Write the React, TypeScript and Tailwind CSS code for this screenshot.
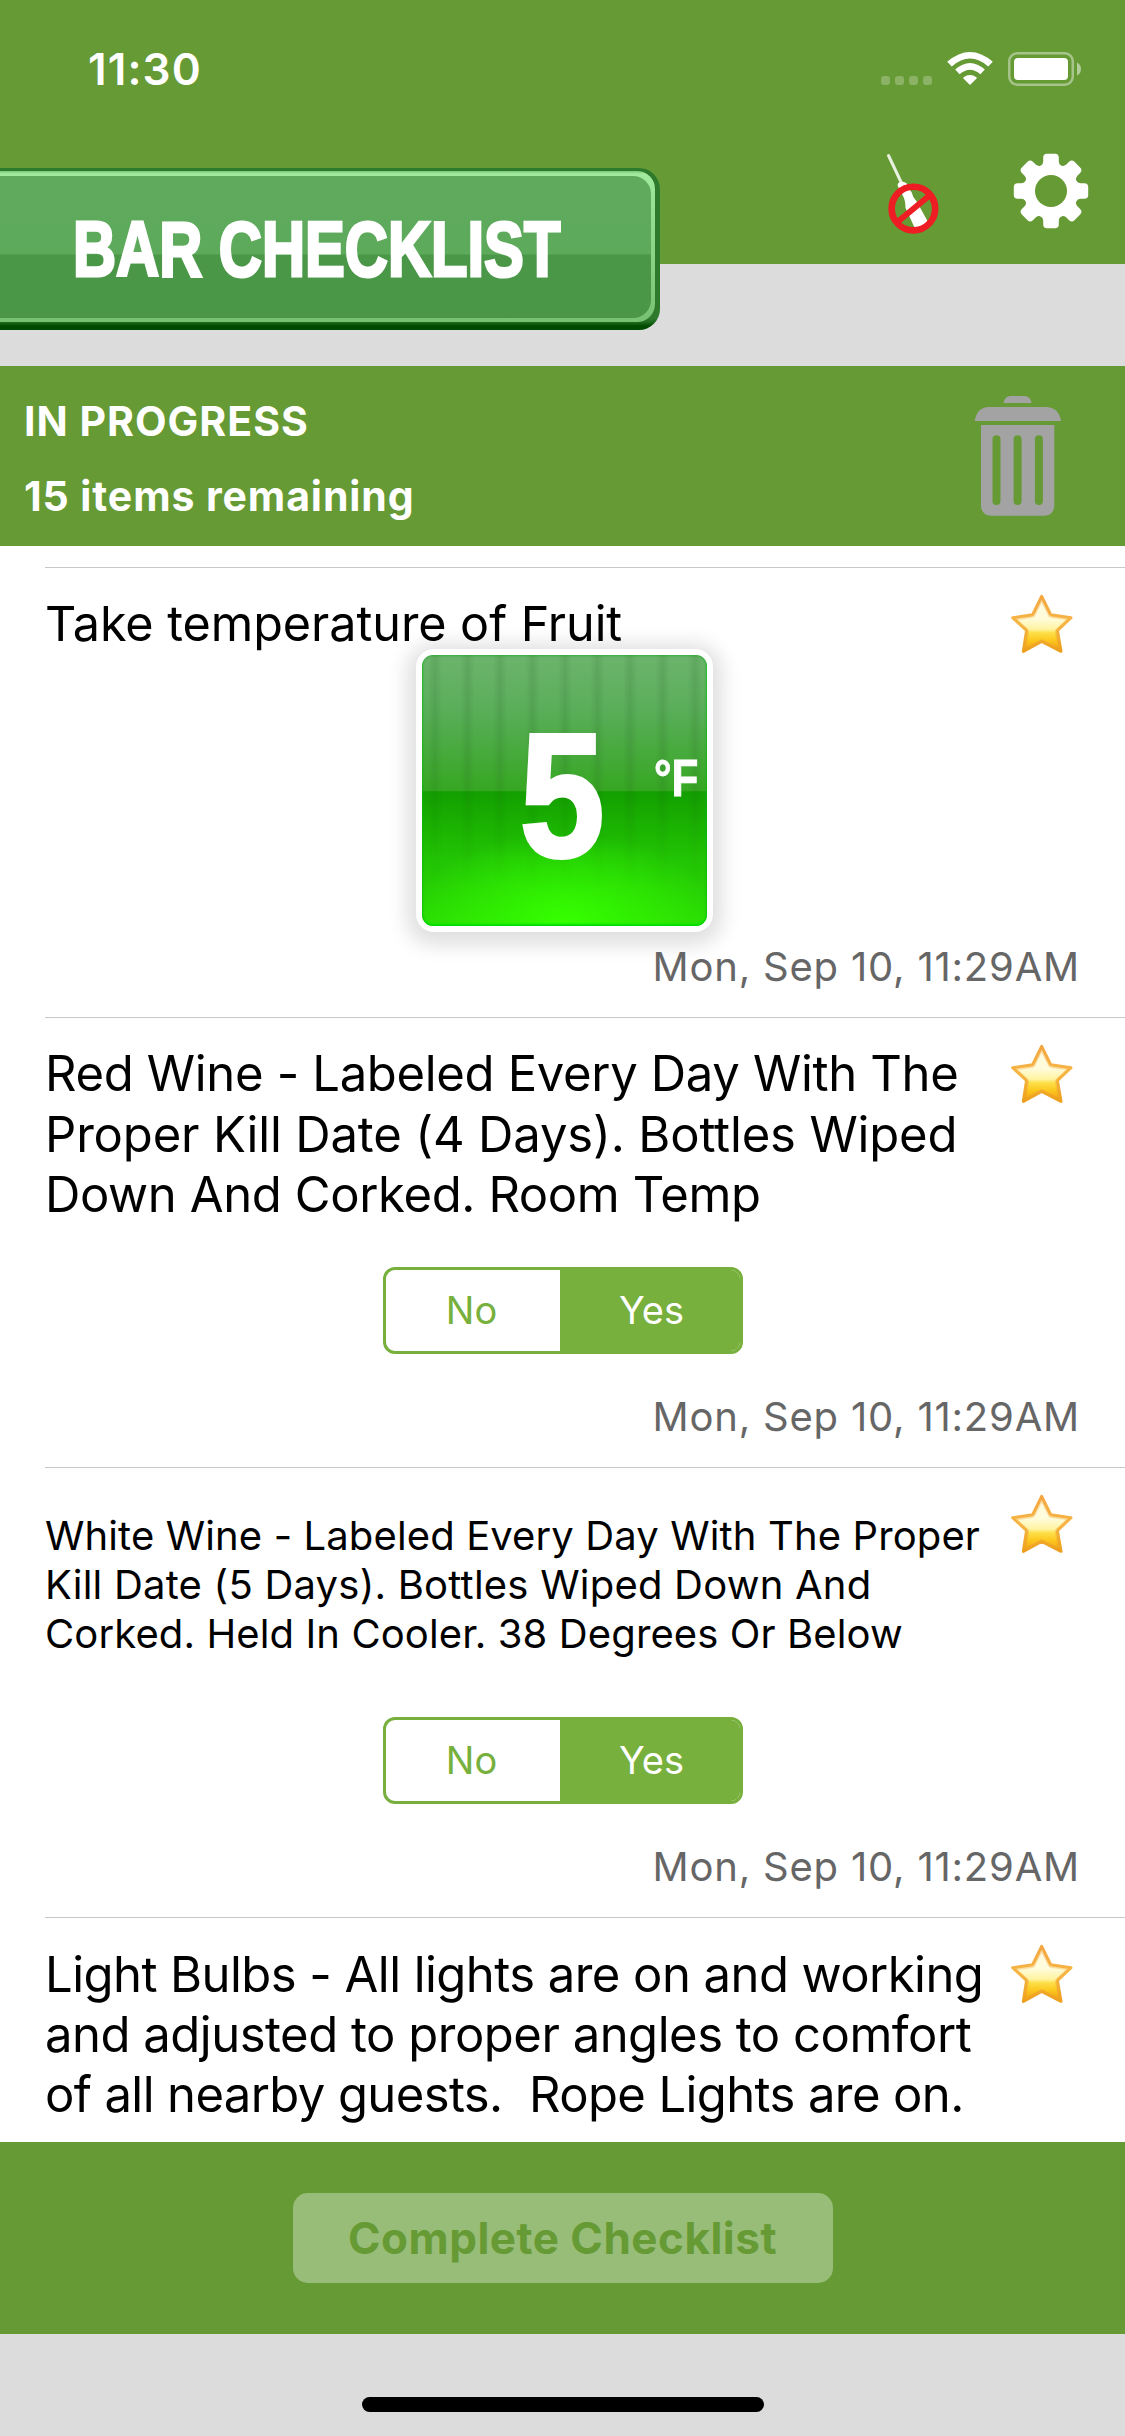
interface Line {
  text: string;
  tracking: string;
}

interface ChecklistItem {
  id: number;
  lines: Line[];
  textClass: string;
  type?: 'temperature' | 'yesno';
  value?: string;
  date?: string;
}

const items: ChecklistItem[] = [
  {
    id: 1,
    textClass: 'pt-[26px] text-[48.5px] leading-[60px]',
    lines: [{ text: 'Take temperature of Fruit', tracking: 'tracking-[-0.05px]' }],
    type: 'temperature',
    value: '5',
    date: 'Mon, Sep 10, 11:29AM',
  },
  {
    id: 2,
    textClass: 'pt-[26px] text-[49px] leading-[60.5px]',
    lines: [
      { text: 'Red Wine - Labeled Every Day With The', tracking: 'tracking-[-0.33px]' },
      { text: 'Proper Kill Date (4 Days). Bottles Wiped', tracking: 'tracking-[-0.16px]' },
      { text: 'Down And Corked. Room Temp', tracking: 'tracking-[-0.38px]' },
    ],
    type: 'yesno',
    value: 'Yes',
    date: 'Mon, Sep 10, 11:29AM',
  },
  {
    id: 3,
    textClass: 'pt-[43px] text-[40px] leading-[49px]',
    lines: [
      { text: 'White Wine - Labeled Every Day With The Proper', tracking: 'tracking-[0.12px]' },
      { text: 'Kill Date (5 Days). Bottles Wiped Down And', tracking: 'tracking-[0.22px]' },
      { text: 'Corked. Held In Cooler. 38 Degrees Or Below', tracking: 'tracking-[0.11px]' },
    ],
    type: 'yesno',
    value: 'Yes',
    date: 'Mon, Sep 10, 11:29AM',
  },
  {
    id: 4,
    textClass: 'pt-[27px] text-[49px] leading-[60px]',
    lines: [
      { text: 'Light Bulbs - All lights are on and working', tracking: 'tracking-[-0.55px]' },
      { text: 'and adjusted to proper angles to comfort', tracking: 'tracking-[-0.49px]' },
      { text: 'of all nearby guests.  Rope Lights are on.', tracking: 'tracking-[-0.61px]' },
    ],
  },
];

function StatusIcons() {
  return (
    <svg className="mt-[50px] h-[38px] w-[204px]" viewBox="880 50 204 38" fill="#fff">
      <g opacity="0.24">
        <rect x="881" y="76" width="9" height="9" rx="3" />
        <rect x="895" y="76" width="9" height="9" rx="3" />
        <rect x="909" y="76" width="9" height="9" rx="3" />
        <rect x="923" y="76" width="9" height="9" rx="3" />
      </g>
      <path d="M970 85 L963.2 78.2 Q963 77.6 963.6 77.2 Q970 72.6 976.4 77.2 Q977 77.6 976.8 78.2 Z" />
      <path d="M955.2 69.6 Q970 56.4 984.8 69.6 L980.4 74.2 Q970 65.2 959.6 74.2 Z" />
      <path d="M947.2 61.8 Q970 42.2 992.8 61.8 L988.2 66.4 Q970 50.6 951.8 66.4 Z" />
      <rect x="1009.25" y="53.25" width="63.5" height="31.5" rx="8" fill="none" stroke="#fff" strokeWidth="2.5" opacity="0.42" />
      <rect x="1014" y="58" width="54" height="22" rx="4" />
      <path d="M1077 62.5 Q1081 64.5 1081 69 Q1081 73.5 1077 75.5 Z" opacity="0.5" />
    </svg>
  );
}

function NoBottleIcon() {
  return (
    <svg className="h-[86px] w-[56px]" viewBox="885 150 56 86">
      <path d="M888.5 155.5 L901.5 183" stroke="#fff" strokeOpacity="0.85" strokeWidth="3" strokeLinecap="round" />
      <path d="M897.5 185.5 Q898 181 904 182 Q908 183 907.5 187 L911.5 192 Q912.5 197 917 202 L927.5 221 Q922 229 914.5 227.5 L905.5 208 Q905.5 200 902.5 195 Z" fill="#fff" />
      <circle cx="913.4" cy="208.6" r="21.8" fill="none" stroke="#ee1c23" strokeWidth="6.6" />
      <path d="M898 221.5 L929.5 195.5" stroke="#ee1c23" strokeWidth="6" />
    </svg>
  );
}

function GearIcon() {
  return (
    <svg className="h-[78px] w-[78px]" viewBox="-39 -39 78 78">
      <g fill="#fff">
        {[0, 45, 90, 135].map((angle) => (
          <path
            key={angle}
            transform={`rotate(${angle})`}
            d="M-4 -37.2 H4 Q7.8 -37.2 7.8 -33.4 V-29.5 Q8.2 -24.8 13.5 -24.4 L13.5 24.4 Q8.2 24.8 7.8 29.5 V33.4 Q7.8 37.2 4 37.2 H-4 Q-7.8 37.2 -7.8 33.4 V29.5 Q-8.2 24.8 -13.5 24.4 L-13.5 -24.4 Q-8.2 -24.8 -7.8 -29.5 V-33.4 Q-7.8 -37.2 -4 -37.2 Z"
          />
        ))}
      </g>
      <circle r="16" fill="#669a34" />
    </svg>
  );
}

function TrashIcon() {
  return (
    <svg className="h-[122px] w-[88px]" viewBox="974 395 88 122" fill="#a3a3a3">
      <path d="M1003.5 403 Q1005 396 1010.5 396 H1024.5 Q1030 396 1031.7 403 Z" />
      <path d="M974.7 421 Q977 407 989 407 H1047 Q1059 408 1061 421 Z" />
      <path
        fillRule="evenodd"
        d="M981 425 H1054.3 V505 Q1054.3 515.8 1043.5 515.8 H992 Q981 515.8 981 505 Z
           M992.5 439.3 V501 A4 4 0 0 0 1000.5 501 V439.3 A4 4 0 0 0 992.5 439.3 Z
           M1013.6 439.3 V501 A4 4 0 0 0 1021.6 501 V439.3 A4 4 0 0 0 1013.6 439.3 Z
           M1034.9 439.3 V501 A4 4 0 0 0 1042.9 501 V439.3 A4 4 0 0 0 1034.9 439.3 Z"
      />
    </svg>
  );
}

const STAR =
  'M125 33 L151 86 Q153 89 157 89 L213 97 L175 133 Q172 136 173 140 L183 198 L125 168 L70 198 L79 140 Q80 136 77 133 L38 97 L93 89 Q97 89 99 86 Z';

function StarIcon() {
  return (
    <svg className="h-[60px] w-[64px]" viewBox="30 26 192 180">
      <defs>
        <linearGradient id="starFill" x1="0" y1="0" x2="0" y2="1">
          <stop offset="0" stopColor="#fffbe0" />
          <stop offset="0.4" stopColor="#fffcdc" />
          <stop offset="0.6" stopColor="#fff3a0" />
          <stop offset="0.66" stopColor="#fde04a" />
          <stop offset="0.8" stopColor="#fcc81e" />
          <stop offset="1" stopColor="#f09a14" />
        </linearGradient>
        <linearGradient id="starEdge" x1="0" y1="0" x2="0" y2="1">
          <stop offset="0" stopColor="#f4a640" />
          <stop offset="0.5" stopColor="#f6b544" />
          <stop offset="1" stopColor="#eda01e" />
        </linearGradient>
      </defs>
      <path d={STAR} fill="url(#starFill)" stroke="url(#starEdge)" strokeWidth="9" strokeLinejoin="round" />
      <path d={STAR} fill="none" stroke="url(#starEdge)" strokeWidth="8" strokeOpacity="0.4" strokeLinejoin="round" transform="translate(125 122) scale(0.9) translate(-125 -120)" />
    </svg>
  );
}

function TemperatureTile({ value }: { value: string }) {
  return (
    <div className="ml-1 rounded-[18px] bg-white p-[6px] shadow-[0_4px_20px_9px_rgba(0,0,0,0.13)]">
      <div className="relative h-[271px] w-[285px] overflow-hidden rounded-[11px] bg-[linear-gradient(180deg,#6cb46c_0%,#5aae5a_20%,#36a722_50%,#139f00_50.5%,#22c404_75%,#2cdc04_100%)]">
        <div className="absolute inset-0 bg-[radial-gradient(ellipse_55%_32%_at_50%_98%,#36ff00_0%,#34ff0099_40%,transparent_100%)]" />
        <div className="absolute inset-0 bg-[repeating-linear-gradient(90deg,transparent_0px,transparent_6px,rgba(30,80,30,0.13)_13px,transparent_20px,transparent_32.5px)] [mask-image:linear-gradient(180deg,black_40%,transparent_85%)]" />
        <div className="absolute inset-0 rounded-[11px] shadow-[inset_0_0_3px_0px_#04a810,inset_0_-2px_2px_0px_#00f000]" />
        <span className="absolute left-[90px] top-[38px] w-[100px] origin-center scale-x-[0.86] text-center font-['Liberation_Sans',sans-serif] text-[177px] font-bold leading-[204px] text-white [-webkit-text-stroke:4px_white]">
          {value}
        </span>
        <span className="absolute left-[232px] top-[96px] origin-left scale-x-[0.86] font-['Liberation_Sans',sans-serif] text-[51px] font-bold leading-[56px] text-white [-webkit-text-stroke:1px_white]">
          °F
        </span>
      </div>
    </div>
  );
}

function YesNo({ value }: { value?: string }) {
  return (
    <div className="flex h-[87px] w-[360px] overflow-hidden rounded-[12px] border-[3px] border-[#77b03c] text-[38px]">
      <div
        className={
          value === 'No'
            ? 'flex w-[174px] items-center justify-center bg-[#77b03c] text-white'
            : 'flex w-[174px] items-center justify-center pr-[2px] text-[#77b03c]'
        }
      >
        No
      </div>
      <div
        className={
          value === 'Yes'
            ? 'flex flex-1 items-center justify-center bg-[#77b03c] pl-1 text-white'
            : 'flex flex-1 items-center justify-center text-[#77b03c]'
        }
      >
        Yes
      </div>
    </div>
  );
}

function ChecklistRow({ item }: { item: ChecklistItem }) {
  const isTemperature = item.type === 'temperature';

  return (
    <div className="ml-[45px] flex h-[450px] shrink-0 flex-col border-t border-[#c8c8c8]">
      <div className={isTemperature ? 'z-10 flex h-[81px] justify-between' : 'z-10 flex h-[249px] justify-between'}>
        <div className={item.textClass}>
          {item.lines.map((line) => (
            <div key={line.text} className={`whitespace-pre ${line.tracking}`}>
              {line.text}
            </div>
          ))}
        </div>
        <div className="mr-[51px] mt-[26px] shrink-0">
          <StarIcon />
        </div>
      </div>
      {item.type && (
        <div className="mr-[45px] flex justify-center">
          {isTemperature ? <TemperatureTile value={item.value ?? ''} /> : <YesNo value={item.value} />}
        </div>
      )}
      {item.date && (
        <div className="mt-auto pb-[26px] pr-[45px] text-right text-[40px] leading-[48px] tracking-[0.8px] text-[#666]">
          {item.date}
        </div>
      )}
    </div>
  );
}

export default function App() {
  return (
    <div className="flex h-[2436px] w-[1125px] flex-col overflow-hidden bg-[#dcdcdc] font-['Inter',sans-serif] text-black">
      {/* Header */}
      <div className="relative h-[264px] bg-[#669a34]">
        <div className="flex justify-between pl-[88px] pr-[41px] text-white">
          <span className="mt-[42px] text-[44px] font-semibold leading-[54px] tracking-[1.1px]">11:30</span>
          <StatusIcons />
        </div>
        <div className="mt-[54px] flex items-start justify-end gap-[71px] pr-[35px]">
          <NoBottleIcon />
          <div className="mt-[2px]">
            <GearIcon />
          </div>
        </div>

        {/* Title plate hangs below the header */}
        <div className="absolute left-0 top-[168px] h-[162px] w-[660px] rounded-r-[21px] bg-[linear-gradient(180deg,#2d7a2d_0%,#2d7a2d_93%,#1a661a_95.5%,#004a00_97.5%,#004a00_100%)] pb-[8px] pr-[5px] pt-[3px]">
          <div className="h-full rounded-r-[18px] bg-[linear-gradient(180deg,#7cc878_0px,#a2eb9e_3px,#9ae496_20px,#76c272_100%)] pb-[4px] pr-[4px] pt-[5px]">
            <div className="flex h-full items-center rounded-r-[18px] bg-[linear-gradient(180deg,#60aa5e_0px,#5daa5b_78px,#4b9748_79px,#4b9748_100%)] pl-[73px]">
              <span className="origin-left scale-x-[0.775] whitespace-nowrap pt-[4px] font-['Liberation_Sans',sans-serif] text-[77px] font-bold leading-[80px] text-white [-webkit-text-stroke:3px_white]">
                BAR CHECKLIST
              </span>
            </div>
          </div>
        </div>
      </div>

      {/* Progress */}
      <div className="mt-[102px] flex h-[180px] shrink-0 justify-between bg-[#669a34] pl-[24px] pr-[63px] pt-[29px] text-[41px] font-bold leading-[52px] text-white">
        <div>
          <div className="tracking-[1px]">IN PROGRESS</div>
          <div className="mt-[23px] tracking-[0.9px]">15 items remaining</div>
        </div>
        <TrashIcon />
      </div>

      {/* Items */}
      <div className="flex h-[1596px] shrink-0 flex-col overflow-hidden bg-white pt-[21px]">
        {items.map((item) => (
          <ChecklistRow key={item.id} item={item} />
        ))}
      </div>

      {/* Footer */}
      <div className="flex h-[192px] shrink-0 items-center justify-center bg-[#669a34]">
        <button className="h-[90px] w-[540px] rounded-[15px] bg-[#98bd78] text-[44px] font-bold tracking-[0.5px] text-[#669a34]">
          Complete Checklist
        </button>
      </div>
      <div className="flex h-[102px] shrink-0 justify-center pt-[63px]">
        <div className="h-[15px] w-[402px] rounded-full bg-black" />
      </div>
    </div>
  );
}
